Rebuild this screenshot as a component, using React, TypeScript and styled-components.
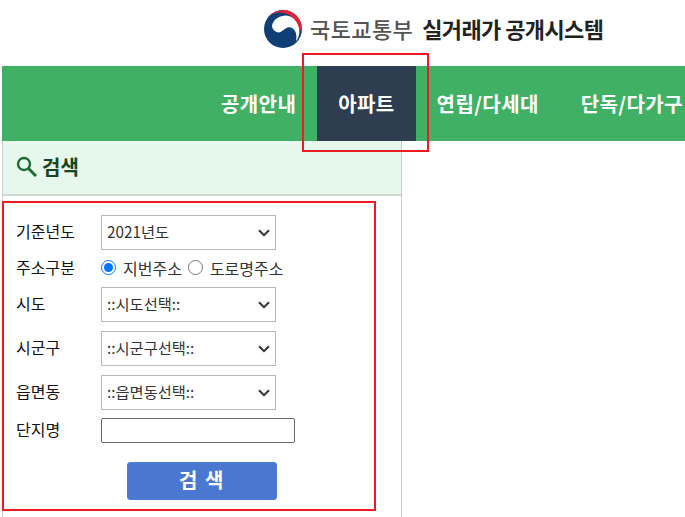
import React from "react";
import styled, { createGlobalStyle } from "styled-components";

const Global = createGlobalStyle`
  html, body { margin: 0; padding: 0; background: #fff; }
  body { width: 685px; height: 517px; overflow: hidden; font-family: "Noto Sans CJK KR", "Noto Sans", sans-serif; }
  * { box-sizing: border-box; }
`;
const chevron = `url("data:image/svg+xml,%3Csvg xmlns='http://www.w3.org/2000/svg' width='12' height='8' viewBox='0 0 12 8'%3E%3Cpath d='M1 1.200 L6 6.200 L11 1.200' fill='none' stroke='%23333' stroke-width='2'/%3E%3C/svg%3E")`;
const Page = styled.div`position: relative; width: 685px; height: 517px; overflow: hidden;`;
const Header = styled.header`height: 66px; display: flex; align-items: center; padding: 0 0 9px 263px;`;
const Logo = styled.svg`width: 40px; height: 40px; flex: none;`;
const Ministry = styled.span`margin: 0 0 2px 7px; font-size: 22px; line-height: 1; color: #555; letter-spacing: 0.4px; font-weight: 500;`;
const Title = styled.span`margin: 0 0 2px 9px; font-size: 22px; line-height: 1; color: #222; font-weight: 700; letter-spacing: -0.6px;`;
const Nav = styled.nav`margin-left: 2px; height: 75px; background: #40b065; display: flex; padding-left: 198px; white-space: nowrap;`;
const NavItem = styled.a<{ $active?: boolean }>`
  display: flex; align-items: center; height: 75px; padding: 0 21px; color: #fff; font-size: 20px; font-weight: 700; flex: none; letter-spacing: 0.4px;
  background: ${p => (p.$active ? "#2e3e50" : "transparent")};
`;
const Panel = styled.aside`margin-left: 2px; width: 400px; height: 376px; border-left: 1px solid #ccc; border-right: 1px solid #ccc;`;
const PanelHead = styled.div`height: 55px; background: #e6f7ec; border-bottom: 2px solid #d2d8d4; display: flex; align-items: center; padding: 0 0 2px 13px; gap: 5px;`;
const PanelTitle = styled.h2`margin: 0; font-size: 20px; line-height: 1; font-weight: 700; color: #14451f;`;
const Form = styled.form`display: flex; flex-direction: column; gap: 9px; padding: 19px 0 0 13px;`;
const Row = styled.div<{ $tight?: boolean }>`display: flex; align-items: center; ${p => p.$tight && "margin-top: -1px;"}`;
const Label = styled.label`width: 85px; flex: none; padding-bottom: 3px; font-size: 16px; line-height: 1; color: #111;`;
const Select = styled.select`
  appearance: none; width: 175px; height: 35px; padding: 0 0 3px 5px; border: 1px solid #b8b8b8; border-radius: 0;
  background: #fff ${chevron} no-repeat right 5px center;
  font: 400 15.300px "Noto Sans CJK KR", sans-serif; color: #333;
`;
const Radios = styled.div`display: flex; align-items: center; height: 19px; padding-bottom: 2px; font-size: 16px; line-height: 1; color: #333;`;
const Radio = styled.input`width: 15px; height: 15px; margin: 0 7px 0 0; flex: none;`;
const RadioText = styled.span`margin-right: 6px;`;
const TextInput = styled.input`width: 194px; height: 25px; border: 1px solid #666; border-radius: 2px; background: #fff; padding: 0;`;
const Submit = styled.button`
  align-self: flex-start; width: 150px; height: 38px; margin: 10px 0 0 111px; border: 1px solid #4a7fd4; border-radius: 3px;
  background: #4a77cf; color: #fff; font: 700 20px/1 "Noto Sans CJK KR", sans-serif; letter-spacing: 1.500px; padding: 0 0 2px;
`;
const Note = styled.div<{ $x: number; $y: number; $w: number; $h: number }>`
  position: absolute; left: ${p => p.$x}px; top: ${p => p.$y}px; width: ${p => p.$w}px; height: ${p => p.$h}px;
  border: 2px solid #ec1c24; pointer-events: none;
`;

export default function App() {
  return (
    <Page>
      <Global />
      <Header>
        <Logo viewBox="0 0 40 40">
          <circle cx="20" cy="20" r="19" fill="#0f3f75" />
          <path d="M9 17 C10 10 17 6.500 23 6.500 C31 7 36.500 14 36.500 22 C36.500 26 35 30 33 32 C35 23 30 17 24.500 18.500 C21 19.500 18 25 13.500 23 C10.500 21.500 9 19 9 17 Z" fill="#fff" />
          <path d="M7 6 A19 19 0 0 1 39 20 L36.500 23 A20 20 0 0 0 7 6 Z" fill="#e0243c" />
        </Logo>
        <Ministry>국토교통부</Ministry>
        <Title>실거래가 공개시스템</Title>
      </Header>
      <Nav>
        <NavItem>공개안내</NavItem>
        <NavItem $active>아파트</NavItem>
        <NavItem>연립/다세대</NavItem>
        <NavItem>단독/다가구</NavItem>
      </Nav>
      <Panel>
        <PanelHead>
          <svg width="21" height="21" viewBox="0 0 21 21" fill="none" stroke="#1c6b34" strokeWidth="2.4">
            <circle cx="8" cy="8" r="6" />
            <path d="M12.500 12.500 L20 20" strokeWidth="3" />
          </svg>
          <PanelTitle>검색</PanelTitle>
        </PanelHead>
        <Form>
          <Row>
            <Label>기준년도</Label>
            <Select defaultValue="2021"><option value="2021">2021년도</option></Select>
          </Row>
          <Row>
            <Label>주소구분</Label>
            <Radios>
              <Radio type="radio" name="addr" defaultChecked />
              <RadioText>지번주소</RadioText>
              <Radio type="radio" name="addr" />
              <RadioText>도로명주소</RadioText>
            </Radios>
          </Row>
          <Row>
            <Label>시도</Label>
            <Select><option>::시도선택::</option></Select>
          </Row>
          <Row>
            <Label>시군구</Label>
            <Select><option>::시군구선택::</option></Select>
          </Row>
          <Row>
            <Label>읍면동</Label>
            <Select><option>::읍면동선택::</option></Select>
          </Row>
          <Row $tight>
            <Label>단지명</Label>
            <TextInput type="text" />
          </Row>
          <Submit type="button">검 색</Submit>
        </Form>
      </Panel>
      <Note $x={302} $y={53} $w={127} $h={99} />
      <Note $x={2} $y={201} $w={374} $h={310} />
    </Page>
  );
}
